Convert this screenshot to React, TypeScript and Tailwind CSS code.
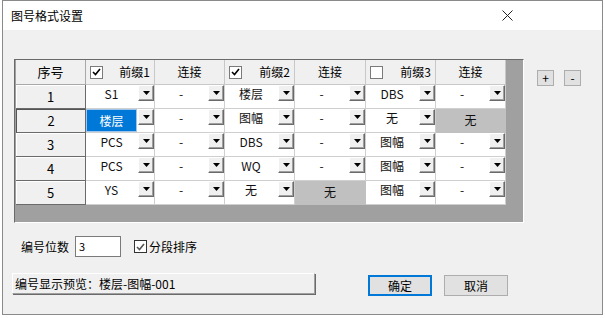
import React from 'react';

type CellData = { v: string; kind?: 'sel' | 'off' };

const rows: CellData[][] = [
  [{ v: 'S1' }, { v: '-' }, { v: '楼层' }, { v: '-' }, { v: 'DBS' }, { v: '-' }],
  [{ v: '楼层', kind: 'sel' }, { v: '-' }, { v: '图幅' }, { v: '-' }, { v: '无' }, { v: '无', kind: 'off' }],
  [{ v: 'PCS' }, { v: '-' }, { v: 'DBS' }, { v: '-' }, { v: '图幅' }, { v: '-' }],
  [{ v: 'PCS' }, { v: '-' }, { v: 'WQ' }, { v: '-' }, { v: '图幅' }, { v: '-' }],
  [{ v: 'YS' }, { v: '-' }, { v: '无' }, { v: '无', kind: 'off' }, { v: '图幅' }, { v: '-' }],
];

const headers = [
  { label: '前缀1', check: true },
  { label: '连接' },
  { label: '前缀2', check: true },
  { label: '连接' },
  { label: '前缀3', check: false },
  { label: '连接' },
];

function Check({ on, gray }: { on: boolean; gray?: boolean }) {
  return (
    <span className={`w-[13px] h-[13px] flex items-center justify-center bg-white border ${gray ? 'border-[#333]' : 'border-[#7a7a7a]'}`}>
      {on && (
        <svg width="9" height="8" viewBox="0 0 9 8">
          <path d="M1 4 L3.5 6.5 L8 1" fill="none" stroke={gray ? '#555' : '#000'} strokeWidth="1.6" />
        </svg>
      )}
    </span>
  );
}

function DropBtn() {
  return (
    <span className="w-[16px] h-[16px] shrink-0 flex items-center justify-center bg-[#f0f0f0] border border-t-white border-l-white border-r-[#6a6a6a] border-b-[#6a6a6a] shadow-[inset_-1px_-1px_0_#a0a0a0]">
      <svg width="7" height="4" viewBox="0 0 7 4">
        <path d="M0 0 H7 L3.5 4 Z" fill="#000" />
      </svg>
    </span>
  );
}

function Cell({ c }: { c: CellData }) {
  if (c.kind === 'off') {
    return (
      <div className="h-[24px] bg-[#c0c0c0] flex justify-center pt-[2px] text-[12px] leading-[18px] text-[#111] border-r border-[#c0c0c0]">
        {c.v}
      </div>
    );
  }
  return (
    <div className="h-[24px] bg-white border-r border-b border-[#cfcfcf] flex items-start">
      <div
        className={`flex-1 h-[23px] flex justify-center text-[12px] leading-[16px] pt-[1px] ${
          c.kind === 'sel' ? 'bg-[#0078d7] text-white border border-[#9fc6ea] pt-[3px]' : 'text-[#111]'
        }`}
      >
        {c.v}
      </div>
      <div className="w-[17px] pl-[1px]">
        <DropBtn />
      </div>
    </div>
  );
}

export default function App() {
  return (
    <div className="w-[605px] h-[318px] bg-white font-['Noto_Sans_CJK_SC','Microsoft_YaHei',sans-serif] text-[12px] text-black">
      <div className="ml-[2px] w-[601px] h-[315px] border border-[#8a8a8a] bg-[#f0f0f0] flex flex-col">
        {/* Title bar */}
        <div className="h-[29px] bg-white flex items-center justify-between pl-[8px] pr-[89px]">
          <span className="text-[12px]">图号格式设置</span>
          <svg width="11" height="11" viewBox="0 0 11 11">
            <path d="M0.5 0.5 L10.5 10.5 M10.5 0.5 L0.5 10.5" stroke="#222" strokeWidth="1" />
          </svg>
        </div>

        {/* Grid + side buttons */}
        <div className="flex pt-[29px] pl-[11px]">
          <div className="w-[510px] h-[164px] bg-[#a0a0a0] border border-t-[#6a6a6a] border-l-[#6a6a6a] border-r-white border-b-white pl-[1px]">
            <div className="grid grid-cols-[70px_69px_70px_70px_71px_70px_70px]">
              <div className="h-[25px] bg-[#f0f0f0] border-r border-b border-[#a8a8a8] flex items-center justify-center text-[13px]">序号</div>
              {headers.map((h, i) => (
                <div
                  key={i}
                  className={`h-[25px] bg-[#f0f0f0] border-r border-b border-[#c8c8c8] flex items-center ${
                    h.check !== undefined ? 'pl-[4px] justify-between pr-[4px]' : 'justify-center'
                  }`}
                >
                  {h.check !== undefined && <Check on={h.check} />}
                  <span>{h.label}</span>
                </div>
              ))}
              {rows.map((r, ri) => (
                <React.Fragment key={ri}>
                  <div
                    className={`h-[24px] bg-[#f0f0f0] border-r border-b border-[#6a6a6a] flex items-center justify-center text-[13px] ${
                      ri === 1 ? 'border-l border-t border-l-[#555] border-t-[#555]' : 'shadow-[inset_1px_1px_0_#ffffff]'
                    }`}
                  >
                    {ri + 1}
                  </div>
                  {r.map((c, ci) => (
                    <Cell key={ci} c={c} />
                  ))}
                </React.Fragment>
              ))}
            </div>
          </div>
          <div className="flex gap-[10px] ml-[13px] mt-[11px]">
            <span className="w-[17px] h-[16px] border border-[#adadad] bg-[#e1e1e1] flex items-center justify-center text-[12px] leading-none">+</span>
            <span className="w-[17px] h-[16px] border border-[#adadad] bg-[#e1e1e1] flex items-center justify-center text-[12px] leading-none">-</span>
          </div>
        </div>

        {/* Options row */}
        <div className="flex items-center mt-[13px] pl-[18px] h-[21px]">
          <span className="w-[54px]">编号位数</span>
          <span className="w-[46px] h-[21px] bg-white border border-[#7a7a7a] pl-[3px] text-[11px] leading-[19px]">3</span>
          <span className="ml-[13px] flex items-center gap-[1px]">
            <Check on gray />
            <span className="ml-[1px]">分段排序</span>
          </span>
        </div>

        {/* Preview + buttons */}
        <div className="flex items-start mt-[16px] pl-[9px]">
          <div className="w-[303px] h-[21px] bg-[#f0f0f0] border border-t-white border-l-white border-r-[#a0a0a0] border-b-[#a0a0a0] shadow-[1px_1px_0_#6a6a6a] pl-[2px] leading-[19px]">
            编号显示预览：楼层-图幅-001
          </div>
          <button className="ml-[53px] mt-[2px] w-[64px] h-[21px] bg-[#e1e1e1] border-2 border-[#0078d7] flex items-center justify-center text-[12px]">
            确定
          </button>
          <button className="ml-[12px] mt-[2px] w-[64px] h-[21px] bg-[#e1e1e1] border border-[#adadad] flex items-center justify-center text-[12px]">
            取消
          </button>
        </div>
      </div>
    </div>
  );
}
